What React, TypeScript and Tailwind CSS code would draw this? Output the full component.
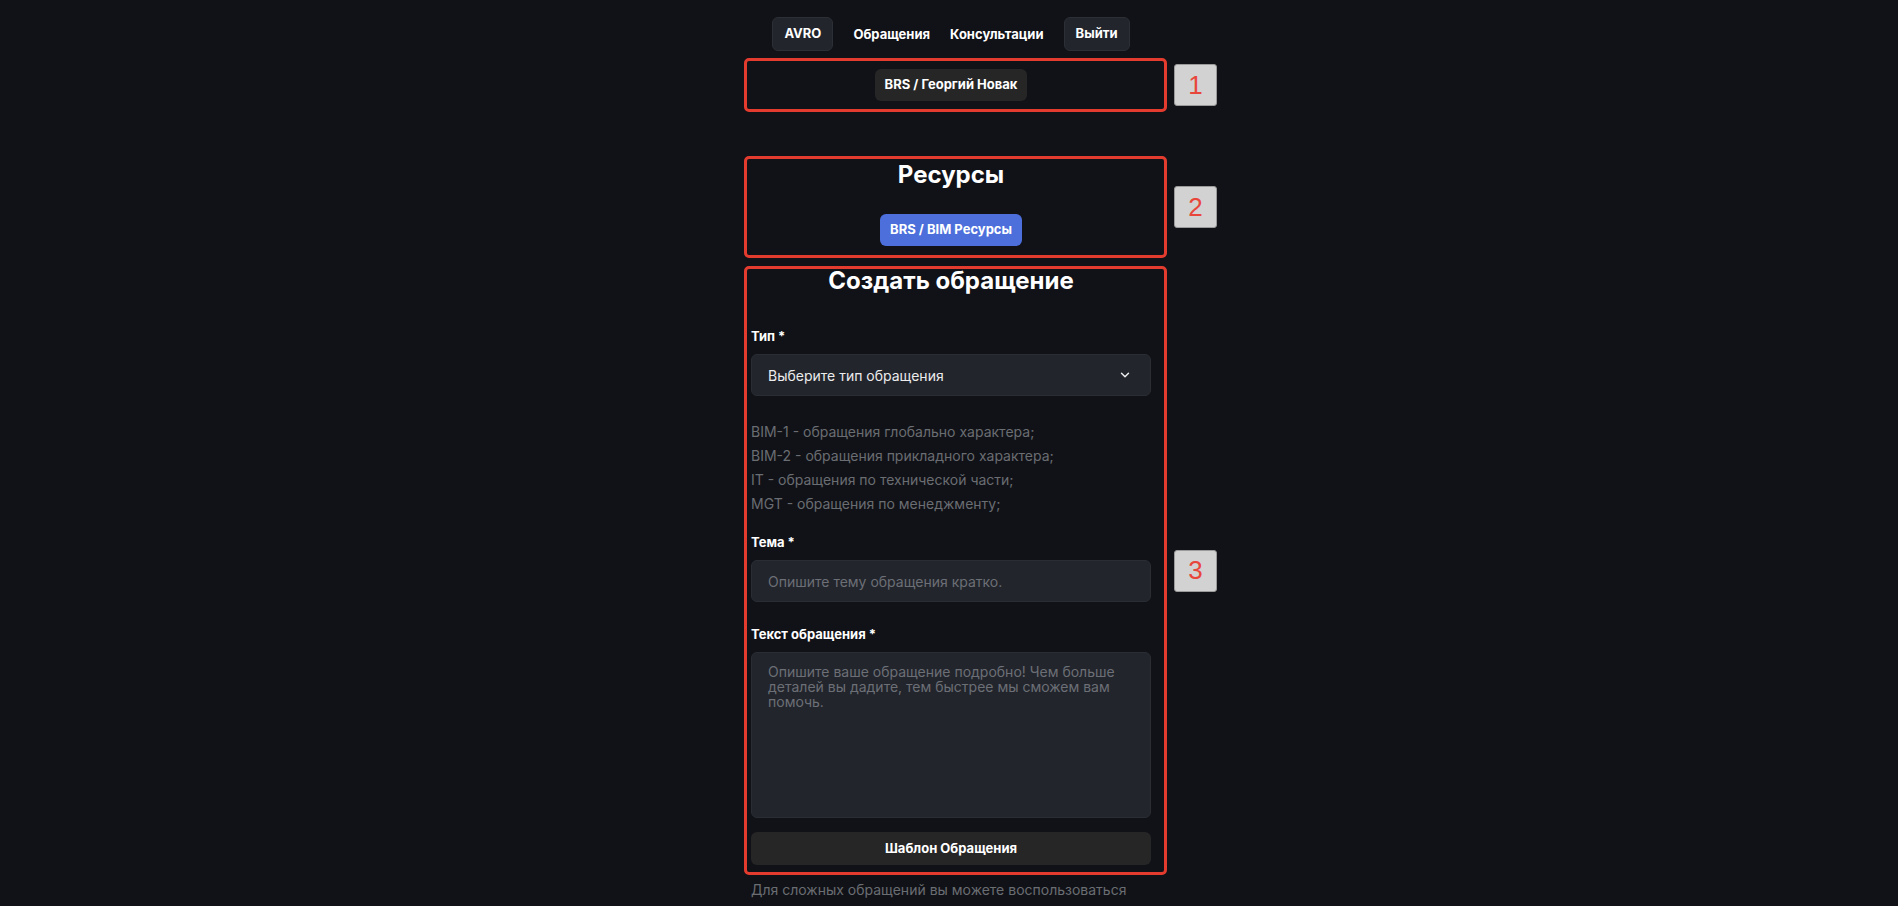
import React from 'react';
import { ChevronDown } from 'lucide-react';

const Marker = ({ n }: { n: string }) => (
  <div className="absolute left-full top-1/2 ml-[10px] flex h-[42px] w-[43px] -translate-y-1/2 items-center justify-center rounded-[3px] border border-[#9a9a9a] bg-[#d2d2d2] font-['Liberation_Sans',sans-serif] text-[26px] font-light text-[#e8463a]">
    {n}
  </div>
);

const Frame = ({ n, className, children }: { n: string; className?: string; children: React.ReactNode }) => (
  <div className={`relative -ml-[7px] -mr-[16px] rounded-[5px] border-[3px] border-[#e33b2e] pl-[4px] pr-[13px] ${className ?? ''}`}>
    {children}
    <Marker n={n} />
  </div>
);

const App = () => {
  return (
    <div className="min-h-screen bg-[#111217] font-['Inter',sans-serif] text-white">
      <div className="flex justify-center pl-[4px]">
        <div className="flex w-[400px] flex-col pt-[17px]">
          <nav className="flex items-center justify-center gap-5 text-[13px] font-bold">
            <button className="h-[34px] rounded-md border border-[#2c2f36] bg-[#22252c] px-[11px]">AVRO</button>
            <a className="leading-none">Обращения</a>
            <a className="leading-none">Консультации</a>
            <button className="h-[34px] rounded-md border border-[#2c2f36] bg-[#22252c] px-[11px]">Выйти</button>
          </nav>

          <Frame n="1" className="mt-[7px] flex justify-center py-[8px]">
            <button className="h-[32px] rounded-md bg-[#262626] px-[10px] text-[13px] font-bold">BRS / Георгий Новак</button>
          </Frame>

          <Frame n="2" className="mt-[44px] flex flex-col items-center pb-[9px]">
            <h2 className="text-[24px] leading-8 font-bold">Ресурсы</h2>
            <button className="mt-[23px] h-[32px] rounded-md bg-[#4c6fdb] px-[10px] text-[13px] font-bold">BRS / BIM Ресурсы</button>
          </Frame>

          <Frame n="3" className="mt-[8px] flex flex-col pb-[7px]">
            <h2 className="text-center text-[24px] leading-6 font-bold">Создать обращение</h2>

            <label className="mt-[33px] text-[13px] leading-5 font-bold">Тип *</label>
            <div className="mt-[8px] flex h-[42px] items-center justify-between rounded-md border border-[#2a2d34] bg-[#22252c] pl-[16px] pr-[18px] text-[14px] text-[#ececec]">
              <span>Выберите тип обращения</span>
              <ChevronDown size={14} strokeWidth={2.5} />
            </div>

            <div className="mt-[24px] text-[14px] leading-6 text-[#6a6d72]">
              <p>BIM-1 - обращения глобально характера;</p>
              <p>BIM-2 - обращения прикладного характера;</p>
              <p>IT - обращения по технической части;</p>
              <p>MGT - обращения по менеджменту;</p>
            </div>

            <label className="mt-[16px] text-[13px] leading-5 font-bold">Тема *</label>
            <div className="mt-[8px] flex h-[42px] items-center rounded-md border border-[#2a2d34] bg-[#22252c] px-[16px] text-[14px] text-[#6c6f76]">
              Опишите тему обращения кратко.
            </div>

            <label className="mt-[22px] text-[13px] leading-5 font-bold">Текст обращения *</label>
            <div className="mt-[8px] h-[166px] rounded-md border border-[#2a2d34] bg-[#22252c] px-[16px] pt-[11px] text-[14px] leading-[15px] text-[#6c6f76]">
              Опишите ваше обращение подробно! Чем больше деталей вы дадите, тем быстрее мы сможем вам помочь.
            </div>

            <button className="mt-[14px] h-[33px] rounded-md bg-[#262626] text-[13px] font-bold">Шаблон Обращения</button>
          </Frame>

          <p className="mt-[3px] text-[14px] leading-6 text-[#6a6d72]">Для сложных обращений вы можете воспользоваться</p>
        </div>
      </div>
    </div>
  );
};

export default App;
